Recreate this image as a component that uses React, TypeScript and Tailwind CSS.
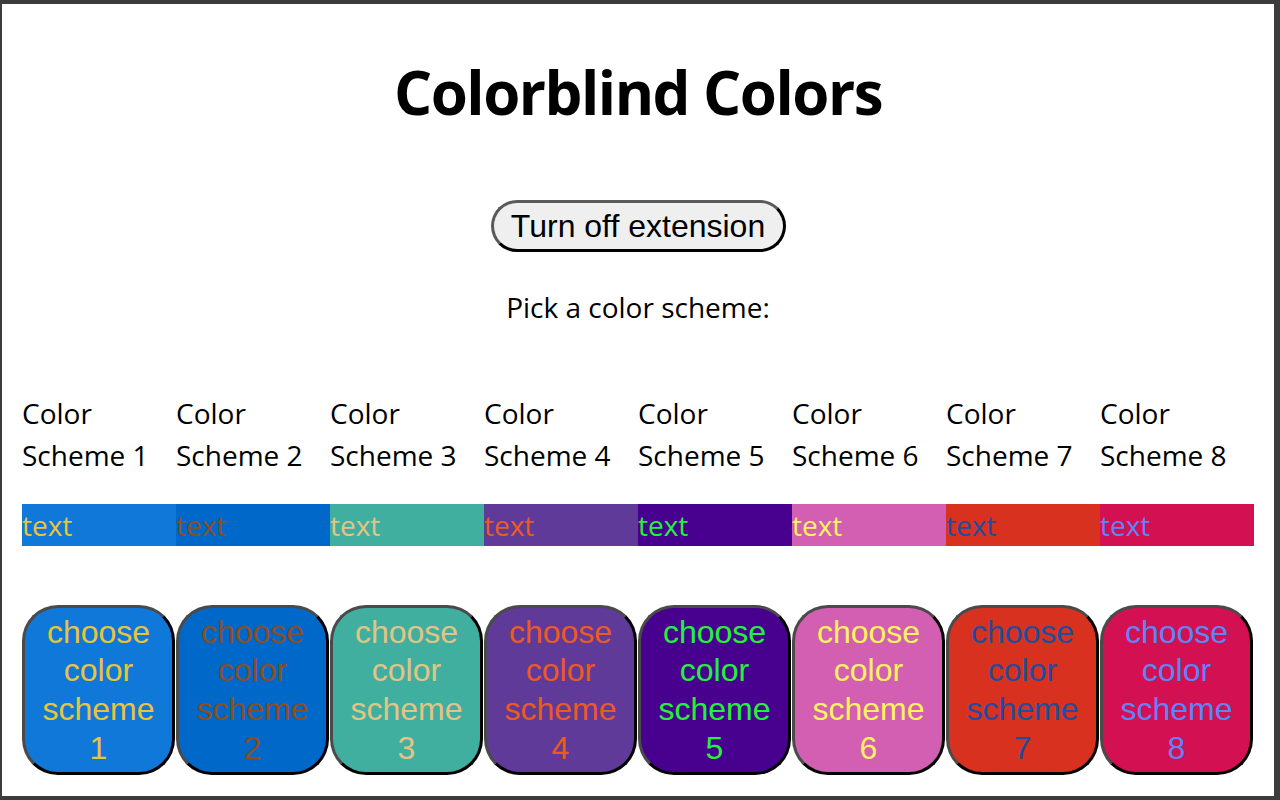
import React from "react";

interface Scheme {
  id: number;
  bg: string;
  fg: string;
}

// background / text colour pairs for the eight schemes
const schemes: Scheme[] = [
  { id: 1, bg: "bg-[#0f78d8]", fg: "text-[#e8c43c]" },
  { id: 2, bg: "bg-[#0068c9]", fg: "text-[#8a4e22]" },
  { id: 3, bg: "bg-[#40afa0]", fg: "text-[#e2c484]" },
  { id: 4, bg: "bg-[#5f3a98]", fg: "text-[#ec5a22]" },
  { id: 5, bg: "bg-[#48008f]", fg: "text-[#22f23a]" },
  { id: 6, bg: "bg-[#d25fb1]", fg: "text-[#fff35e]" },
  { id: 7, bg: "bg-[#d9311f]", fg: "text-[#224c9c]" },
  { id: 8, bg: "bg-[#d21052]", fg: "text-[#5f84f8]" },
];

const uiFont = "font-['Open_Sans','Noto_Sans',sans-serif]";
const btnFont = "font-['Liberation_Sans',Arial,sans-serif]";

export default function App() {
  return (
    <div className="w-[1280px] h-[800px] bg-[#3c3c3c] pt-[4px] pl-[2px] pr-[6px] pb-[4px]">
      <div className={`h-full bg-white px-[20px] text-black ${uiFont}`}>
        {/* Header */}
        <h1 className="pt-[58px] text-center text-[60px] leading-[60px] font-bold tracking-[-1.5px]">
          Colorblind Colors
        </h1>

        <div className="flex justify-center mt-[78px]">
          <button
            className={`w-[295px] h-[52px] rounded-full border-[3px] border-t-[#5a5a5a] border-l-[#5a5a5a] border-b-black border-r-black bg-[#efefef] text-[32px] leading-none text-black ${btnFont}`}
          >
            Turn off extension
          </button>
        </div>

        <p className="mt-[34px] text-center text-[28px] leading-[42px]">Pick a color scheme:</p>

        {/* Scheme labels */}
        <div className="grid grid-cols-8 mt-[64px] text-[28px] leading-[42px]">
          {schemes.map((s) => (
            <div key={s.id}>
              <div>Color</div>
              <div>Scheme {s.id}</div>
            </div>
          ))}
        </div>

        {/* Preview bar */}
        <div className="grid grid-cols-8 mt-[28px] h-[42px] text-[28px] leading-[42px]">
          {schemes.map((s) => (
            <div key={s.id} className={`${s.bg} ${s.fg}`}>
              text
            </div>
          ))}
        </div>

        {/* Choose buttons */}
        <div className="grid grid-cols-8 mt-[59px]">
          {schemes.map((s) => (
            <div key={s.id}>
              <button
                className={`w-[153px] h-[170px] rounded-[36px] border-[3px] border-t-[#4a4a4a] border-l-[#4a4a4a] border-b-black border-r-black px-[6px] flex flex-col items-center justify-center text-[32px] leading-[38.7px] ${s.bg} ${s.fg} ${btnFont}`}
              >
                <span>choose</span>
                <span>color</span>
                <span>scheme</span>
                <span>{s.id}</span>
              </button>
            </div>
          ))}
        </div>
      </div>
    </div>
  );
}
